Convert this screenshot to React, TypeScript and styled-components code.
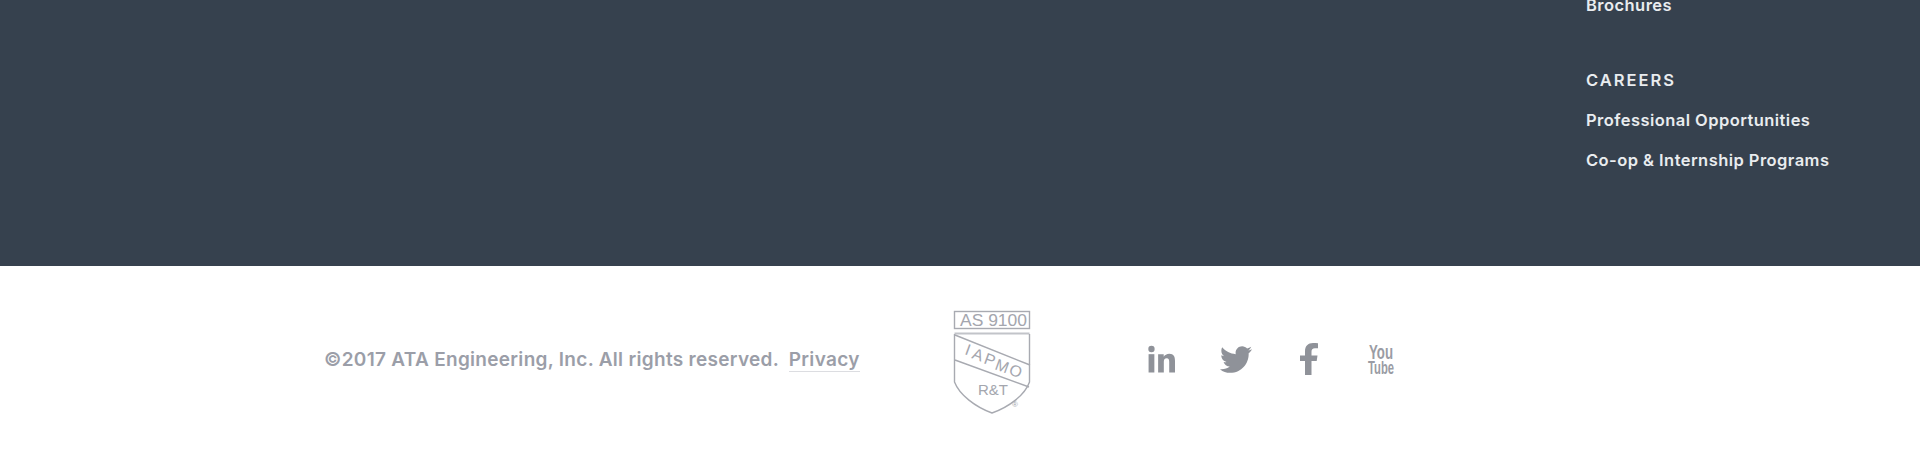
import React from "react";
import styled, { createGlobalStyle } from "styled-components";

const Global = createGlobalStyle`
  html, body { margin: 0; padding: 0; background: #fff; }
  body { font-family: Inter, "Open Sans", Arial, sans-serif; overflow: hidden; }
`;

const Page = styled.div`
  width: 1920px;
  height: 468px;
  overflow: hidden;
  display: flex;
  flex-direction: column;
`;

const DarkPanel = styled.section`
  height: 266px;
  flex: none;
  background: #36414e;
  display: flex;
  align-items: flex-end;
  padding: 0 0 96px 1586px;
  box-sizing: border-box;
  overflow: hidden;
`;

const LinkColumn = styled.nav`
  display: flex;
  flex-direction: column;
`;

const NavLink = styled.a`
  color: #e9ecef;
  font-size: 16.5px;
  font-weight: 600;
  line-height: 20px;
  letter-spacing: 0.45px;
  white-space: nowrap;
  margin-top: 20px;
`;

const NavHeading = styled.h4`
  margin: 55px 0 0;
  color: #e9ecef;
  font-size: 16.5px;
  font-weight: 600;
  line-height: 20px;
  letter-spacing: 2px;
`;

const LegalBar = styled.footer`
  flex: 1;
  display: flex;
  align-items: center;
  padding: 0 0 16px 324px;
`;

const Copyright = styled.p`
  margin: 2px 0 0;
  width: 629px;
  flex: none;
  color: #9b9ea8;
  font-size: 19px;
  font-weight: 600;
  line-height: 24px;
  letter-spacing: 0.3px;
  white-space: nowrap;
`;

const Privacy = styled.a`
  margin-left: 5px;
  border-bottom: 1px solid #dcdde1;
`;

const Badge = styled.svg`
  width: 80px;
  height: 105px;
  flex: none;
  margin-top: 6px;
`;

const Socials = styled.div`
  display: flex;
  align-items: center;
  margin-left: 115px;
`;

const SocialSlot = styled.a<{ $w: number; $gap: number }>`
  width: ${(p) => p.$w}px;
  margin-right: ${(p) => p.$gap}px;
  display: flex;
  color: #8f9299;
`;

const YouTubeMark = styled.svg`
  display: block;
  width: 28px;
  height: 40px;
`;

export default function App() {
  return (
    <Page>
      <Global />
      <DarkPanel>
        <LinkColumn>
          <NavLink>Brochures</NavLink>
          <NavHeading>CAREERS</NavHeading>
          <NavLink>Professional Opportunities</NavLink>
          <NavLink>Co-op &amp; Internship Programs</NavLink>
        </LinkColumn>
      </DarkPanel>
      <LegalBar>
        <Copyright>
          ©2017 ATA Engineering, Inc. All rights reserved. <Privacy>Privacy</Privacy>
        </Copyright>
        <Badge viewBox="0 0 80 105" fill="none" stroke="#a8aab1" strokeWidth="1.4">
          <rect x="1.500" y="1.500" width="75" height="17" />
          <path d="M1.500 23.500h75" strokeWidth="1.800" stroke="#c2c4c9" />
          <path d="M1.500 24v48c5 13 21 25 37.500 31 17-6 33-18 37.500-31V24" />
          <path d="M2 25l75 30M2 50l74 27" />
          <g fill="#a4a6ae" stroke="none" fontFamily="Liberation Sans, Arial, sans-serif">
            <text x="7" y="16" fontSize="16" textLength="67" lengthAdjust="spacingAndGlyphs">AS 9100</text>
            <text x="11" y="44" fontSize="16" transform="rotate(20 11 44)">I</text>
            <text x="18" y="48" fontSize="16" transform="rotate(20 18 48)">A</text>
            <text x="30" y="53" fontSize="16" transform="rotate(20 30 53)">P</text>
            <text x="41" y="59" fontSize="16" transform="rotate(20 41 59)">M</text>
            <text x="55" y="64" fontSize="16" transform="rotate(20 55 64)">O</text>
            <text x="25" y="85" fontSize="15.500" textLength="30" lengthAdjust="spacingAndGlyphs">R&amp;T</text>
            <text x="59" y="97" fontSize="8">®</text>
          </g>
        </Badge>
        <Socials>
          <SocialSlot $w={28} $gap={44}>
            <svg width="27" height="28" viewBox="0 0 28 28" fill="currentColor">
              <circle cx="3.600" cy="3.600" r="3.300" />
              <rect x="0.600" y="9" width="6" height="19" />
              <path d="M10.500 9h5.800v2.700c1-1.800 3.200-3.200 5.800-3.200 4.600 0 5.900 3 5.900 7.600V28h-6V17.200c0-2.200-.5-3.900-2.600-3.900-2.300 0-3 1.700-3 3.900V28h-5.900z" />
            </svg>
          </SocialSlot>
          <SocialSlot $w={32} $gap={48}>
            <svg width="32" height="27" viewBox="0 0 24 20" fill="currentColor">
              <path d="M24 2.400c-.9.4-1.800.7-2.800.8 1-.6 1.800-1.600 2.200-2.700-1 .6-2 1-3.100 1.200C19.400.7 18.100 0 16.600 0c-2.700 0-4.900 2.200-4.900 4.900 0 .4 0 .8.100 1.100C7.700 5.800 4.100 3.900 1.700.9 1.200 1.600 1 2.500 1 3.400c0 1.700.9 3.200 2.200 4.100-.8 0-1.600-.2-2.200-.6v.1c0 2.400 1.700 4.400 3.900 4.800-.4.100-.8.200-1.300.2-.3 0-.6 0-.9-.1.600 2 2.400 3.400 4.600 3.400-1.700 1.300-3.800 2.100-6.100 2.100-.4 0-.8 0-1.200-.1C2.200 19.300 4.800 20 7.500 20c9.100 0 14-7.500 14-14v-.6c1-.7 1.800-1.600 2.500-3z" />
            </svg>
          </SocialSlot>
          <SocialSlot $w={18} $gap={49}>
            <svg width="18" height="32" viewBox="0 0 18 32" fill="currentColor">
              <path d="M5 32V18H0v-5.500h5V8.400C5 3 8.100 0 13 0c1.900 0 3.600.1 5 .3v5h-3c-2.600 0-3.500 1.200-3.500 3.400v3.800h6l-.8 5.500h-5.200v14.500z" />
            </svg>
          </SocialSlot>
          <SocialSlot $w={28} $gap={0}>
            <YouTubeMark viewBox="0 -3 28 40" fill="#9a9ca4">
              <text x="14" y="17" textAnchor="middle" fontFamily="Liberation Sans Narrow, Liberation Sans, sans-serif" fontWeight="700" fontSize="20.500" textLength="24" lengthAdjust="spacingAndGlyphs">You</text>
              <text x="14" y="32" textAnchor="middle" fontFamily="Liberation Sans Narrow, Liberation Sans, sans-serif" fontWeight="700" fontSize="18" textLength="26" lengthAdjust="spacingAndGlyphs">Tube</text>
            </YouTubeMark>
          </SocialSlot>
        </Socials>
      </LegalBar>
    </Page>
  );
}
